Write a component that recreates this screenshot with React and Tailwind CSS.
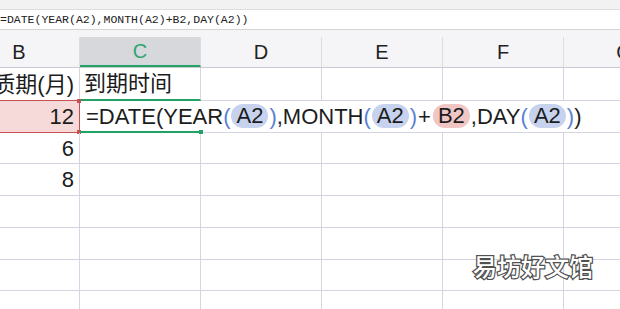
export default function App() {
  const rowH = [33, 32, 31, 32, 32, 32, 31, 40];
  const Paren = ({ c }) => <span className="text-[#5a82d4]">{c}</span>;
  const Chip = ({ t, red }) => (
    <span
      className={
        "inline-block rounded-full px-[5px] mx-[1px] h-[24px] leading-[24px] " +
        (red ? "bg-[#f0c6c4]" : "bg-[#c7d3ee]")
      }
    >
      {t}
    </span>
  );
  return (
    <div className="relative w-[620px] h-[309px] overflow-hidden bg-white font-['Liberation_Sans','Noto_Sans_CJK_SC',sans-serif] text-[#1c1c1c]">
      <div className="h-[10px] bg-[#f2f2f2] border-b border-[#dedede]" />
      <div className="h-[20px] flex items-center bg-white border-b border-[#d4d4d4] font-['Liberation_Mono',monospace] text-[11.5px] text-[#222] whitespace-nowrap">
        =DATE(YEAR(A2),MONTH(A2)+B2,DAY(A2))
      </div>
      <div className="ml-[-41px] flex h-[38px] bg-[#f5f5f7] border-b border-[#c9c9d6] text-[20px]">
        {["B", "C", "D", "E", "F", "G"].map((l) => (
          <div key={l} className="w-[121px] shrink-0 pt-[7px] flex">
            <div
              className={
                "flex-1 flex items-center justify-center border-r border-[#dcdce4] " +
                (l === "C" ? "bg-[#d7d8dc] text-[#2fa571] border-b-2 border-b-[#21a366]" : "text-[#222]")
              }
            >
              {l}
            </div>
          </div>
        ))}
      </div>
      {rowH.map((h, r) => (
        <div key={r} className="ml-[-41px] flex text-[22px]" style={{ height: h }}>
          {[0, 1, 2, 3, 4, 5].map((c) => {
            let cls = "relative w-[121px] shrink-0 flex items-center whitespace-nowrap ";
            let content = null;
            if (r === 1 && c > 0) {
              cls += c === 1 ? "border-b-2 border-b-[#21a366] " : "border-b border-[#d4d4e2] ";
            } else if (r === 0 && c === 1) {
              cls += "border-r border-[#d4d4e2] border-b-2 border-b-[#21a366] ";
            } else if (r === 0 && c === 0) {
              cls += "border-r border-[#d4d4e2] border-b border-b-[#c85050] ";
            } else if (r === 1 && c === 0) {
              cls += "bg-[#f6dada] border-r border-r-[#c85050] border-b border-b-[#c85050] ";
            } else {
              cls += "border-r border-b border-[#d4d4e2] ";
            }
            if (c === 0) {
              cls += "justify-end pr-[5px] ";
              if (r === 0) content = "保质期(月)";
              if (r === 1) content = "12";
              if (r === 2) content = "6";
              if (r === 3) content = "8";
            }
            if (c === 1 && r === 0) {
              cls += "pl-[4px] ";
              content = "到期时间";
            }
            if (c === 1 && r === 1) {
              cls += "pl-[6px] overflow-visible z-10 ";
              content = (
                <span className="flex items-center">
                  <span>=DATE(YEAR</span>
                  <Paren c="(" />
                  <Chip t="A2" />
                  <Paren c=")" />
                  <span>,MONTH</span>
                  <Paren c="(" />
                  <Chip t="A2" />
                  <Paren c=")" />
                  <span className="mx-[1px]">+</span>
                  <Chip t="B2" red />
                  <span>,DAY</span>
                  <Paren c="(" />
                  <Chip t="A2" />
                  <Paren c=")" />
                  <span>)</span>
                </span>
              );
            }
            return (
              <div key={c} className={cls}>
                {content}
                {r === 1 && c === 0 && (
                  <>
                    <span className="absolute right-[-2px] top-[-2px] w-[4px] h-[4px] bg-[#c85050]" />
                    <span className="absolute right-[-2px] bottom-[-2px] w-[4px] h-[4px] bg-[#c85050]" />
                  </>
                )}
                {r === 1 && c === 1 && (
                  <span className="absolute right-[-2px] bottom-[-3px] w-[4px] h-[4px] bg-[#21a366]" />
                )}
              </div>
            );
          })}
        </div>
      ))}
      <div className="absolute left-[473px] top-[254px] text-[24px] font-medium text-white font-['Noto_Sans_CJK_SC',sans-serif] [-webkit-text-stroke:2.5px_#505050] [paint-order:stroke_fill] leading-none">
        易坊好文馆
      </div>
    </div>
  );
}
